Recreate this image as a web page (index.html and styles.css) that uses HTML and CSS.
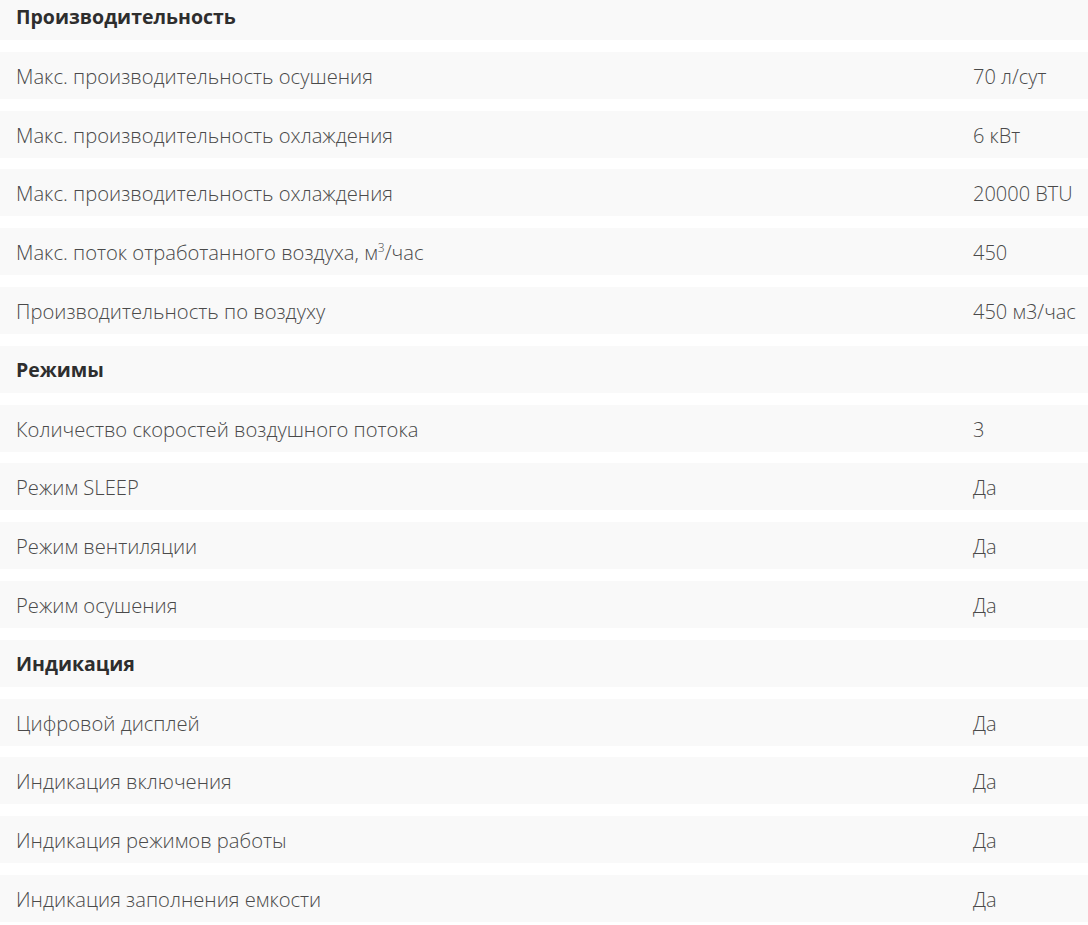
FILE: index.html
```html
<!DOCTYPE html>
<html lang="ru">
<head>
<meta charset="utf-8">
<link rel="stylesheet" href="styles.css">
</head>
<body>
<div class="specs">
  <div class="row head"><span class="label">Производительность</span></div>
  <div class="row"><span class="label">Макс. производительность осушения</span><span class="value">70 л/сут</span></div>
  <div class="row"><span class="label">Макс. производительность охлаждения</span><span class="value">6 кВт</span></div>
  <div class="row"><span class="label">Макс. производительность охлаждения</span><span class="value">20000 BTU</span></div>
  <div class="row"><span class="label">Макс. поток отработанного воздуха, м<sup>3</sup>/час</span><span class="value">450</span></div>
  <div class="row"><span class="label">Производительность по воздуху</span><span class="value">450 м3/час</span></div>
  <div class="row head"><span class="label">Режимы</span></div>
  <div class="row"><span class="label">Количество скоростей воздушного потока</span><span class="value">3</span></div>
  <div class="row"><span class="label">Режим SLEEP</span><span class="value">Да</span></div>
  <div class="row"><span class="label">Режим вентиляции</span><span class="value">Да</span></div>
  <div class="row"><span class="label">Режим осушения</span><span class="value">Да</span></div>
  <div class="row head"><span class="label">Индикация</span></div>
  <div class="row"><span class="label">Цифровой дисплей</span><span class="value">Да</span></div>
  <div class="row"><span class="label">Индикация включения</span><span class="value">Да</span></div>
  <div class="row"><span class="label">Индикация режимов работы</span><span class="value">Да</span></div>
  <div class="row"><span class="label">Индикация заполнения емкости</span><span class="value">Да</span></div>
</div>
</body>
</html>
```
FILE: styles.css
```css
html, body {
  margin: 0;
  padding: 0;
  background: #fff;
}
body {
  font-family: "Open Sans", "Noto Sans", sans-serif;
  font-size: 20.2px;
  font-weight: 300;
  color: #4a4a4a;
  overflow: hidden;
}
.specs {
  display: flex;
  flex-direction: column;
  gap: 11.8px;
  margin-top: -7px;
}
.row {
  display: grid;
  grid-template-columns: 1fr 115px;
  align-items: center;
  height: 47px;
  padding-left: 16px;
  padding-top: 2px;
  background: #f9f9f9;
  box-sizing: border-box;
}
.row.head {
  padding-top: 0;
}
.label, .value {
  line-height: 27px;
  white-space: nowrap;
}
.value {
  font-size: 20px;
}
.head .label {
  font-weight: 700;
  font-size: 19.5px;
  color: #2e2e2e;
}
sup {
  font-size: 12px;
  line-height: 0;
  vertical-align: 8px;
}
```
